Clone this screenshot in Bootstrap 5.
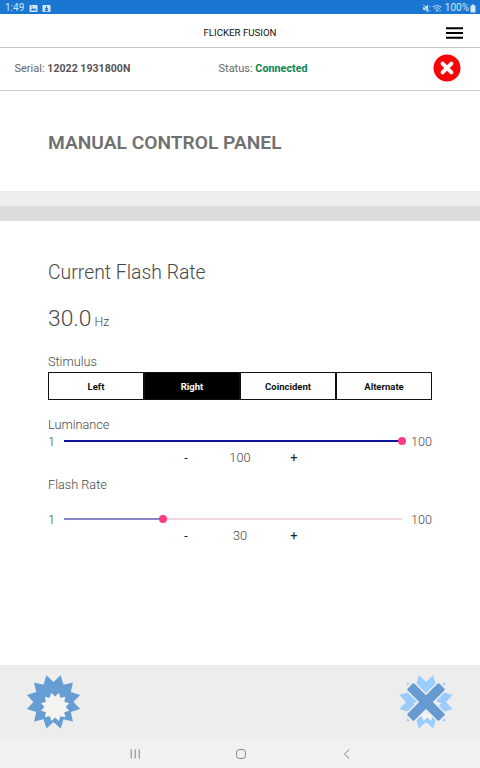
<!DOCTYPE html>
<html lang="en">
<head>
<meta charset="utf-8">
<meta name="viewport" content="width=device-width, initial-scale=1">
<title>Flicker Fusion</title>
<link href="https://cdn.jsdelivr.net/npm/bootstrap@5.3.0/dist/css/bootstrap.min.css" rel="stylesheet">
<style>
body{font-family:Roboto,"Liberation Sans",sans-serif;color:#666;background:#fff;height:768px;overflow:hidden;line-height:1}
svg{display:block;flex:none}
.statusbar{height:14px;background:#1976d2;color:#d5e7f8;font-size:10px;padding:2px 4px 0 5px}
.appbar{height:34px;border-bottom:1px solid #c6c6c6;color:#111;font-size:9.7px;padding-right:17px}
.appbar .app-name{padding-top:5px}
.infobar{height:43px;border-bottom:1px solid #cacaca;font-size:11px;padding:0 19px 4px 14.5px}
.infobar div{padding-top:4px}
.infobar b{font-weight:700;color:#555;font-size:10.6px}
.infobar b.online{color:#10844f;font-size:10.8px}
.titlebar{height:100px;padding:4px 48px 0}
.titlebar h1{font-size:19.2px;font-weight:600;color:#707070}
.strip-a{height:15px;background:#ededed}
.strip-b{height:15px;background:#dcdcdc}
.panel{height:444px;padding:0 48px;font-weight:300;color:#484848}
.rate-title{font-size:19.4px;font-weight:300;margin-top:40px;height:20px;white-space:nowrap}
.rate-value{font-size:22.8px;margin-top:27px;height:24px;gap:3px}
.rate-value span{font-size:12.4px}
.field{font-size:12.7px;height:14px;line-height:16px}
.seg{height:28px;margin-top:4px;font-size:9.5px;font-weight:700;color:#111}
.seg div{border:1px solid #111;height:28px;padding-top:2px}
.seg .active{background:#000;color:#fff}
.scale-row{height:14px;font-size:12.6px}
.scale-row .lo{width:16px;padding-top:2px}
.scale-row .hi{width:30px;text-align:right;padding-top:2px}
.track{height:2px;background:#eed8dc}
.fill{height:2px;background:#8686c4}
.fill.full{background:#10109c}
.knob{width:8px;height:8px;border-radius:50%;background:#fb3c7f;flex:none;margin-right:-4px}
.stepper{height:14px;font-size:12.8px;margin-top:2px;line-height:16px}
.stepper span{width:54px;text-align:center}
.stepper .op{color:#222;font-weight:400}
.actions{height:74px;background:#ededed;padding:0 26px}
.sysnav{height:29px;background:#f1f1f1;padding:0 129px 0 130px}
</style>
</head>
<body>
<svg width="0" height="0" class="position-absolute"><defs>
<polygon id="burst" points="0,-20 7.1,-26.8 10,-17.3 19.4,-19.4 17.3,-10 26.6,-7.1 20,0 26.6,7.1 17.3,10 19.4,19.4 10,17.3 7.1,26.6 0,20 -7.1,26.6 -10,17.3 -19.4,19.4 -17.3,10 -26.6,7.1 -20,0 -26.6,-7.1 -17.3,-10 -19.4,-19.4 -10,-17.3 -7.1,-26.8"/>
</defs></svg>
<div class="statusbar d-flex align-items-center">
  <span>1:49</span>
  <svg style="margin-left:5px" width="9" height="9" viewBox="0 0 9 9"><rect x=".5" y="1" width="8" height="7" rx=".8" fill="#d5e7f8"/><path d="M1.5 6.5 3.5 4l1.3 1.4L6 4l1.6 2.5z" fill="#1976d2"/><circle cx="3" cy="2.7" r=".7" fill="#1976d2"/></svg>
  <svg style="margin-left:4px" width="9" height="9" viewBox="0 0 9 9"><path d="M.5 1h8v7h-8z" fill="#d5e7f8"/><path d="M4 2h1v2h1.2L5.3 5.6 7 7.2H2l1.7-1.6L2.8 4H4z" fill="#1976d2"/></svg>
  <svg class="ms-auto" width="9" height="9" viewBox="0 0 9 9"><path d="M1 3.2h1.8L6 .8v7.4L2.8 5.8H1z" fill="#d5e7f8"/><path d="M.8 1.8 7 8" stroke="#1976d2" stroke-width=".6"/><path d="M1.2.7 8 7.6M7 3l1.2-1" stroke="#d5e7f8" stroke-width=".9"/></svg>
  <svg style="margin-left:1px;margin-right:3px" width="10" height="9" viewBox="0 0 10 9"><path d="M.8 3.2a6 6 0 0 1 8.4 0M2.3 4.9a3.8 3.8 0 0 1 5.4 0" fill="none" stroke="#a9cef2" stroke-width="1.2"/><path d="M3.5 6 5 8l1.5-2a2.2 2.2 0 0 0-3 0zM7 6l1 2 1-2z" fill="#a9cef2"/></svg>
  <span>100%</span>
  <svg style="margin-left:1px" width="6" height="9" viewBox="0 0 6 9"><path d="M2 .5h2v1h1.5v7h-5v-7H2z" fill="#d5e7f8"/></svg>
</div>
<header class="appbar d-flex align-items-center position-relative">
  <div class="app-name position-absolute start-0 end-0 text-center">FLICKER FUSION</div>
  <svg class="ms-auto mt-1" width="17" height="12" viewBox="0 0 17 12"><path d="M0 1.2h17M0 6h17M0 10.8h17" stroke="#000" stroke-width="2"/></svg>
</header>
<div class="infobar d-flex align-items-center">
  <div style="width:204px">Serial: <b>12022 1931800N</b></div>
  <div>Status: <b class="online">Connected</b></div>
  <svg class="ms-auto" style="margin-top:2px" width="28" height="28" viewBox="0 0 28 28"><circle cx="14" cy="14" r="13.5" fill="#f60606"/><path d="m9.6 9.6 8.8 8.8m0-8.8-8.8 8.8" stroke="#fff" stroke-width="4" stroke-linecap="round"/></svg>
</div>
<div class="titlebar d-flex align-items-center"><h1 class="m-0">MANUAL CONTROL PANEL</h1></div>
<div class="strip-a"></div>
<div class="strip-b"></div>
<main class="panel d-flex flex-column">
  <h2 class="rate-title mb-0">Current Flash Rate</h2>
  <div class="rate-value d-flex align-items-baseline"><div>30.0</div><span>Hz</span></div>
  <div class="field" style="margin-top:22px">Stimulus</div>
  <div class="seg d-flex text-center">
    <div class="flex-fill d-flex align-items-center justify-content-center w-25">Left</div>
    <div class="flex-fill d-flex align-items-center justify-content-center w-25 active">Right</div>
    <div class="flex-fill d-flex align-items-center justify-content-center w-25">Coincident</div>
    <div class="flex-fill d-flex align-items-center justify-content-center w-25">Alternate</div>
  </div>
  <div class="field" style="margin-top:17px">Luminance</div>
  <div class="scale-row d-flex align-items-center" style="margin-top:3px">
    <span class="lo">1</span>
    <div class="track flex-fill"><div class="fill full d-flex align-items-center justify-content-end" style="width:100%"><span class="knob"></span></div></div>
    <span class="hi">100</span>
  </div>
  <div class="stepper d-flex justify-content-center"><span class="op">-</span><span>100</span><span class="op">+</span></div>
  <div class="field" style="margin-top:13px">Flash Rate</div>
  <div class="scale-row d-flex align-items-center" style="margin-top:21px">
    <span class="lo">1</span>
    <div class="track flex-fill"><div class="fill d-flex align-items-center justify-content-end" style="width:29.3%"><span class="knob"></span></div></div>
    <span class="hi">100</span>
  </div>
  <div class="stepper d-flex justify-content-center"><span class="op">-</span><span>30</span><span class="op">+</span></div>
</main>
<footer class="actions d-flex justify-content-between align-items-center">
  <svg width="56" height="56" viewBox="-27.5 -28 56 56"><use href="#burst" fill="#669dd3"/><use href="#burst" transform="translate(1.6 5) scale(.53)" fill="#f4f3f2"/></svg>
  <svg width="56" height="56" viewBox="-28 -28 56 56"><use href="#burst" fill="#99ccff"/><use href="#burst" transform="translate(1.3 5) scale(.53)" fill="#f4f3f2"/><path d="m-13-13 26 26m0-26-26 26" stroke="#ededed" stroke-width="12.6" stroke-linecap="square"/><g fill="#669ad0" transform="rotate(45)"><rect x="-22.5" y="-4.8" width="45" height="9.6" rx="1.5"/><rect x="-4.8" y="-22.5" width="9.6" height="45" rx="1.5"/></g></svg>
</footer>
<nav class="sysnav d-flex justify-content-between align-items-center">
  <svg width="10" height="10" viewBox="0 0 10 10"><path d="M1.2.5v9M5.2.5v9M9.2.5v9" stroke="#858585"/></svg>
  <svg width="10" height="10" viewBox="0 0 10 10"><rect x=".6" y=".6" width="8.8" height="8.8" rx="2.6" fill="none" stroke="#858585"/></svg>
  <svg width="10" height="10" viewBox="0 0 10 10"><path d="M8.1.7 3.4 5l4.7 4.3" fill="none" stroke="#858585"/></svg>
</nav>
<script src="https://cdn.jsdelivr.net/npm/bootstrap@5.3.0/dist/js/bootstrap.bundle.min.js"></script>
</body>
</html>
